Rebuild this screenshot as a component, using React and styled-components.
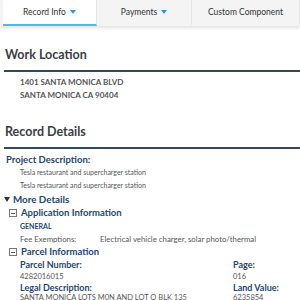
import React from "react";
import styled, { createGlobalStyle } from "styled-components";

const Global = createGlobalStyle`
  html, body { margin: 0; padding: 0; background: #fff; }
  body { font-family: Lato, "Open Sans", sans-serif; color: #444; }
`;

const Page = styled.div`
  width: 300px;
  height: 300px;
  overflow: hidden;
  background: #fff;
`;

const TabBar = styled.div`
  display: flex;
  height: 26px;
  background: #f4f4f4;
  box-shadow: 0 2px 3px rgba(0,0,0,0.12);
  padding-left: 3px;
`;

const Tab = styled.div`
  width: ${p => p.$w}px;
  display: flex;
  align-items: center;
  justify-content: center;
  gap: 4px;
  font-size: 8.5px;
  color: #333;
  background: ${p => (p.$active ? "#fff" : "transparent")};
  border-bottom: 2px solid ${p => (p.$active ? "#4fb8ec" : "transparent")};
  border-right: 1px solid #e6e6e6;
  box-sizing: border-box;
`;

const Caret = styled.span`
  width: 0;
  height: 0;
  border-left: 3.5px solid transparent;
  border-right: 3.5px solid transparent;
  border-top: 4px solid #2a9ae0;
`;

const Section = styled.div`
  padding: 0 0 0 4px;
`;

const SectionTitle = styled.div`
  font-size: 12.5px;
  line-height: 14px;
  font-weight: 700;
  color: #3a3d44;
  padding: ${p => p.$top}px 0 8px 1px;
  border-bottom: 2px solid #34455e;
`;

const Address = styled.div`
  padding: 4px 0 0 16px;
  font-size: 8px;
  font-weight: 700;
  color: #555;
  line-height: 13px;
`;

const Body = styled.div`
  padding-top: 5px;
`;

const Label = styled.div`
  font-size: ${p => p.$size || 9.5}px;
  font-weight: 700;
  color: #23466e;
  padding-left: ${p => p.$indent || 0}px;
  line-height: ${p => p.$lh || 12}px;
  display: flex;
  align-items: center;
  gap: 2px;
`;

const Text = styled.div`
  font-size: 7px;
  color: #555;
  padding-left: ${p => p.$indent || 0}px;
  line-height: 13px;
`;

const Box = styled.span`
  width: 6px;
  height: 6px;
  border: 1px solid #777;
  display: inline-flex;
  align-items: center;
  justify-content: center;
  margin-right: 2px;
  &::after {
    content: "";
    width: 4px;
    height: 1px;
    background: #555;
  }
`;

const DownTri = styled.span`
  width: 0;
  height: 0;
  border-left: 3.5px solid transparent;
  border-right: 3.5px solid transparent;
  border-top: 5px solid #333;
  margin-right: 1px;
`;

const Small = styled.div`
  font-size: 7px;
  font-weight: 700;
  color: #23466e;
  padding-left: ${p => p.$indent || 0}px;
  line-height: 13px;
`;

const FeeRow = styled.div`
  display: grid;
  grid-template-columns: 80px 1fr;
  padding-left: 16px;
  font-size: 7.8px;
  color: #555;
  line-height: 12px;
  white-space: nowrap;
`;

const ParcelGrid = styled.div`
  display: grid;
  grid-template-columns: 213px 1fr;
  padding-left: 16px;
`;

const Col = styled.div`
  display: flex;
  flex-direction: column;
`;

const PLabel = styled.div`
  font-size: 9px;
  font-weight: 700;
  color: #23466e;
  line-height: ${p => p.$lh || 12}px;
`;

const PValue = styled.div`
  font-size: 7.5px;
  color: #555;
  line-height: ${p => p.$lh || 10}px;
  white-space: nowrap;
`;

export default function App() {
  return (
    <Page>
      <Global />
      <TabBar>
        <Tab $w={94} $active>Record Info <Caret /></Tab>
        <Tab $w={95}>Payments <Caret /></Tab>
        <Tab $w={108}>Custom Component</Tab>
      </TabBar>
      <Section>
        <SectionTitle $top={22}>Work Location</SectionTitle>
        <Address>
          1401 SANTA MONICA BLVD<br />
          SANTA MONICA CA 90404
        </Address>
        <SectionTitle $top={23}>Record Details</SectionTitle>
        <Body>
          <Label $indent={2}>Project Description:</Label>
          <Text $indent={16}>Tesla restaurant and supercharger station</Text>
          <Text $indent={16}>Tesla restaurant and supercharger station</Text>
          <Label $lh={14} $size={9.8}><DownTri />More Details</Label>
          <Label $indent={5} $lh={14}><Box />Application Information</Label>
          <Small $indent={16}>GENERAL</Small>
          <FeeRow>
            <span>Fee Exemptions:</span>
            <span>Electrical vehicle charger, solar photo/thermal</span>
          </FeeRow>
          <Label $indent={5} $lh={14}><Box />Parcel Information</Label>
          <ParcelGrid>
            <Col>
              <PLabel>Parcel Number:</PLabel>
              <PValue $lh={11}>4282016015</PValue>
              <PLabel $lh={11}>Legal Description:</PLabel>
              <PValue>SANTA MONICA LOTS M0N AND LOT O BLK 135</PValue>
            </Col>
            <Col>
              <PLabel>Page:</PLabel>
              <PValue $lh={11}>016</PValue>
              <PLabel $lh={11}>Land Value:</PLabel>
              <PValue>6235854</PValue>
            </Col>
          </ParcelGrid>
        </Body>
      </Section>
    </Page>
  );
}
